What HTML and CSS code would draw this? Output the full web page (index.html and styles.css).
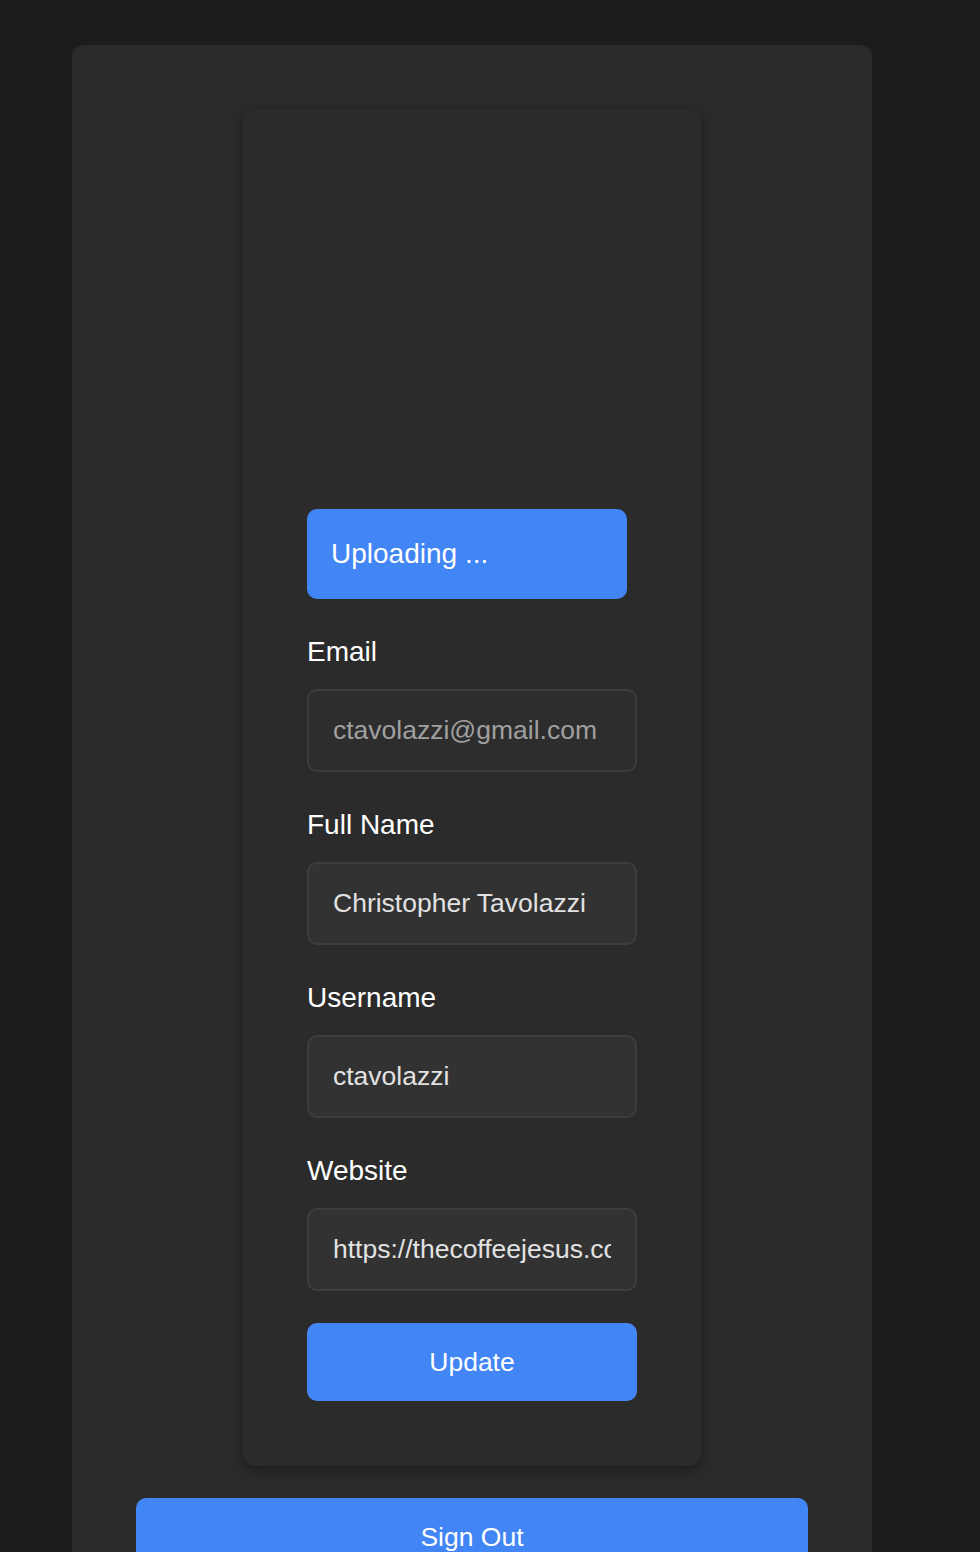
FILE: index.html
```html
<!DOCTYPE html>
<html lang="en">
<head>
<meta charset="utf-8">
<title>Account</title>
<link rel="stylesheet" href="styles.css">
</head>
<body>
<div class="page">
  <main class="outer-card">
    <section class="profile-card">
      <div class="avatar-area"></div>
      <label class="upload-button">Uploading ...</label>
      <div class="field">
        <label class="field-label" for="email">Email</label>
        <input class="field-input is-disabled" id="email" type="text" value="ctavolazzi@gmail.com" disabled>
      </div>
      <div class="field">
        <label class="field-label" for="fullname">Full Name</label>
        <input class="field-input" id="fullname" type="text" value="Christopher Tavolazzi">
      </div>
      <div class="field">
        <label class="field-label" for="username">Username</label>
        <input class="field-input" id="username" type="text" value="ctavolazzi">
      </div>
      <div class="field field-last">
        <label class="field-label" for="website">Website</label>
        <input class="field-input" id="website" type="text" value="https://thecoffeejesus.com">
      </div>
      <button class="primary-button update-button" type="button">Update</button>
    </section>
    <button class="primary-button signout-button" type="button">Sign Out</button>
  </main>
</div>
</body>
</html>
```

FILE: styles.css
```css
html, body {
  margin: 0;
  padding: 0;
  background: #1c1c1c;
  font-family: "Liberation Sans", Arial, Helvetica, sans-serif;
}

.page {
  padding: 45px 0 0 72px;
}

.outer-card {
  width: 800px;
  box-sizing: border-box;
  background: #2b2b2b;
  border-radius: 12px;
  padding: 64px 64px 40px;
  display: flex;
  flex-direction: column;
  align-items: center;
}

.profile-card {
  width: 458px;
  box-sizing: border-box;
  padding: 64px 64px 65px;
  background: #2b2b2b;
  border-radius: 12px;
  box-shadow: 0 4px 14px rgba(0, 0, 0, 0.35);
  display: flex;
  flex-direction: column;
}

.avatar-area {
  height: 336px;
}

.upload-button {
  width: 320px;
  height: 90px;
  box-sizing: border-box;
  background: #4285f4;
  color: #ffffff;
  border-radius: 10px;
  font-size: 28px;
  padding-left: 24px;
  display: flex;
  align-items: center;
  margin-bottom: 36px;
}

.field {
  display: flex;
  flex-direction: column;
  margin-bottom: 36px;
}

.field-last {
  margin-bottom: 32px;
}

.field-label {
  color: #ffffff;
  font-size: 28px;
  line-height: 32px;
  padding-top: 1px;
  margin-bottom: 21px;
}

.field-input {
  width: 330px;
  height: 83px;
  box-sizing: border-box;
  border: 2px solid #3d3d3d;
  border-radius: 10px;
  background: #323232;
  color: #e2e2e2;
  font-family: "Liberation Sans", Arial, Helvetica, sans-serif;
  font-size: 26.5px;
  padding: 0 24px;
  margin: 0;
  outline: none;
}

.field-input.is-disabled {
  background: #2d2d2d;
  color: #a0a0a0;
  -webkit-text-fill-color: #a0a0a0;
  opacity: 1;
}

.primary-button {
  background: #4285f4;
  color: #ffffff;
  border: none;
  border-radius: 10px;
  font-family: "Liberation Sans", Arial, Helvetica, sans-serif;
  font-size: 26.5px;
  height: 78px;
  margin: 0;
  padding: 0;
}

.update-button {
  width: 330px;
}

.signout-button {
  width: 672px;
  margin-top: 32px;
}
```
